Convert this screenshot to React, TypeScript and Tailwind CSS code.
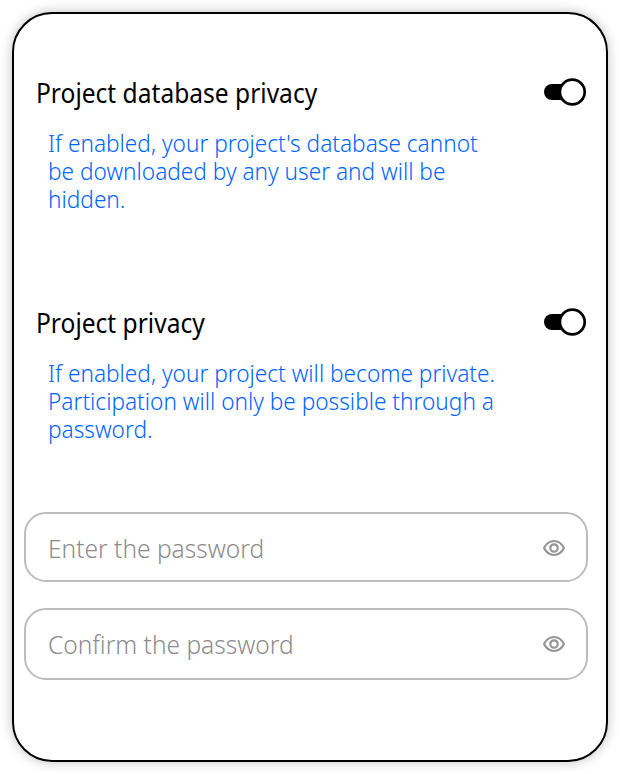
import React from "react";

function Toggle() {
  return (
    <svg width="44" height="30" viewBox="0 0 44 30" className="shrink-0">
      <rect x="1" y="7" width="34" height="16" rx="8" fill="#000" />
      <circle cx="29.300" cy="15" r="12.400" fill="#fff" stroke="#000" strokeWidth="2.700" />
    </svg>
  );
}

function Eye() {
  return (
    <svg width="24" height="18" viewBox="0 0 24 18" fill="none" stroke="#959595" strokeWidth="2.200" className="shrink-0">
      <path d="M2 9C4.300 4.500 7.800 2 12 2s7.700 2.500 10 7C19.700 13.500 16.200 16 12 16S4.300 13.500 2 9Z" strokeLinejoin="round" />
      <circle cx="12" cy="9" r="3.700" />
    </svg>
  );
}

function Setting({ title, lines }: { title: string; lines: string[] }) {
  return (
    <section className="h-[230px] pl-[22px] pr-[19px]">
      <div className="flex h-[30px] items-center justify-between">
        <h2 className="origin-left scale-x-[0.927] pt-[2px] text-[26.5px] leading-[30px] text-black">{title}</h2>
        <Toggle />
      </div>
      <p className="mt-[22px] ml-3 origin-left scale-x-[0.928] text-[24.4px] leading-[28px] font-light text-[#0064ff]">
        {lines.map((line) => (
          <span key={line} className="block whitespace-nowrap">{line}</span>
        ))}
      </p>
    </section>
  );
}

export default function App() {
  return (
    <main className="h-[774px] w-[620px] bg-white p-3 font-['Noto_Sans',sans-serif]">
      <div className="h-[750px] w-[596px] rounded-[40px] border-2 border-black bg-white pt-[63px] shadow-[0_0_12px_rgba(0,0,0,0.25)]">
        <Setting title="Project database privacy" lines={["If enabled, your project's database cannot", "be downloaded by any user and will be", "hidden."]} />
        <Setting title="Project privacy" lines={["If enabled, your project will become private.", "Participation will only be possible through a", "password."]} />
        <div className="-mt-[25px] ml-[10px] w-[564px]">
          <div className="flex h-[70px] items-center justify-between rounded-[22px] border-2 border-[#bdbdbd] pt-[2px] pl-[22px] pr-5 text-[26.5px] leading-[38px] font-light text-[#8c8c8c]">
            <span className="origin-left scale-x-[0.925]">Enter the password</span><Eye />
          </div>
          <div className="mt-[26px] flex h-[72px] items-center justify-between rounded-[22px] border-2 border-[#bdbdbd] pl-[22px] pr-5 text-[26.5px] leading-[38px] font-light text-[#8c8c8c]">
            <span className="origin-left scale-x-[0.925]">Confirm the password</span><Eye />
          </div>
        </div>
      </div>
    </main>
  );
}
